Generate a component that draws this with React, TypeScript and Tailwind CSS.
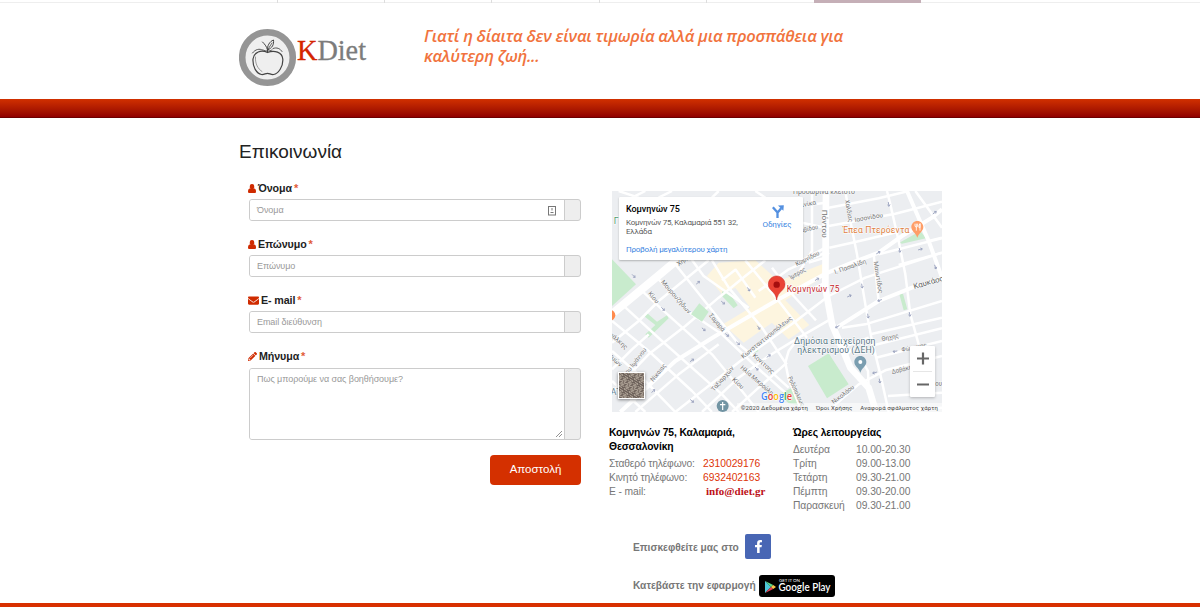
import React from "react";
import { FaEnvelope, FaFacebookF, FaPencilAlt } from "react-icons/fa";

function UserIcon() {
  return (
    <svg viewBox="0 0 8 9" className="h-[9px] w-2 shrink-0 fill-[#cf2b00]">
      <rect x="1.800" y="0" width="4.400" height="5.200" rx="2" />
      <path d="M1.500 4.500h5C7.500 4.800 8 6 8 7.500 8 8.500 7.500 9 6.500 9h-5C.5 9 0 8.500 0 7.500 0 6 .5 4.800 1.500 4.500Z" />
    </svg>
  );
}

function Label({ icon, children }: { icon: React.ReactNode; children: string }) {
  return (
    <div className="-ml-px flex h-3.5 items-center gap-[2px] text-[10.700px] font-bold text-[#222]">
      {icon}
      <span className="tracking-[-0.1px]">{children}</span>
      <span className="text-[11px] font-bold text-[#d83000]/80">*</span>
    </div>
  );
}

function Field({ placeholder, tall, badge }: { placeholder: string; tall?: boolean; badge?: boolean }) {
  return (
    <div className={`flex w-[332px] overflow-hidden rounded-[3px] border border-[#ccc] bg-[#eee] ${tall ? "h-[72px]" : "h-[22px]"}`}>
      <div className={`relative flex w-[315px] justify-between border-r border-[#ccc] bg-white pr-2 pl-[7px] text-[9px] tracking-[-0.07px] text-[#999] ${tall ? "items-start pt-1" : "items-center pt-px"}`}>
        <span>{placeholder}</span>
        {badge && (
          <svg viewBox="0 0 8 10" className="h-[10px] w-2" fill="none" stroke="#777">
            <rect x="0.5" y="0.5" width="7" height="8.500" />
            <path d="M4 2v2.500M2.500 6.500h3" />
          </svg>
        )}
        {tall && (
          <svg viewBox="0 0 6 6" className="absolute right-0.5 bottom-0.5 size-1.5" stroke="#777" strokeWidth="0.8">
            <path d="M0 6 6 0M3 6l3-3" />
          </svg>
        )}
      </div>
    </div>
  );
}

// Map geometry is drawn on a 990 x 663 grid, three units per pixel.
const streets = [
  "M0 455 80 390 140 330 290 208",
  "M0 605 110 490 220 405 320 320 400 255 460 208",
  "M0 535 60 475 110 430",
  "M70 663 200 550 320 460",
  "M190 663 385 510 545 395 650 315 760 260 990 185",
  "M270 663 380 560 470 495 560 440 655 385",
  "M360 663 440 590 525 515",
  "M130 255 240 370 330 430 430 525 520 605",
  "M85 295 150 355 300 490 390 600 440 663",
  "M190 220 290 345 380 460 430 500 530 590",
  "M30 340 150 450 330 610 380 663",
  "M0 390 110 480 240 600 300 663",
  "M0 480 90 560 190 663",
  "M0 570 100 663",
  "M235 200 275 255 410 350",
  "M300 208 350 290 450 410 520 515",
  "M372 235 330 268M370 235 430 320",
  "M400 208 500 330 585 440",
  "M480 230 545 315 612 388",
  "M440 300 530 235 640 185",
  "M570 208 640 170M590 300 640 275",
  "M20 0 80 20M100 0 60 20M180 0 140 20M320 0 300 20M430 0 460 20",
  "M600 0 600 180 560 245M570 95 640 110M570 45 640 35",
  "M650 105 720 92 850 68 990 32",
  "M650 50 800 22 890 0",
  "M652 170 720 155 860 122",
  "M650 185 640 200 590 215",
  "M800 190 990 142",
  "M860 222 990 185",
  "M700 0 715 90 735 190 765 370 780 450 805 550 830 663",
  "M825 0 835 40 860 150 880 250 895 370 920 460 945 563",
  "M785 190 800 330",
  "M690 410 760 400 990 330",
  "M775 430 990 380",
  "M785 463 990 412",
  "M792 500 990 450",
  "M725 470 700 495M690 470 770 440",
  "M665 645 740 580 820 538 990 495",
  "M828 615 990 605",
  "M840 663 990 650",
  "M910 0 990 110M950 150 990 140",
  "M520 515 530 565 570 663",
  "M560 440 530 480 520 515",
  "M770 590 768 540 745 500",
];

const majorStreets = [
  "M25 663 190 510 310 435 430 365 500 325 640 248",
  "M640 248 720 215 800 185 870 135 960 80 990 55",
  "M670 412 800 330 900 290 990 262",
  "M885 0 950 150 990 260",
];

const arrows: [number, number, number][] = [
  [65, 255, 45], [153, 354, 45], [258, 275, -40], [333, 335, 40], [410, 295, 55], [275, 415, 40], [345, 432, 40],
  [378, 457, 40], [440, 410, 55], [240, 508, -35], [470, 495, -35], [434, 533, 45], [124, 600, -40], [240, 630, 40],
  [615, 265, -30], [70, 520, 45], [830, 40, 80], [799, 185, -30], [863, 178, 80], [925, 175, -15], [968, 65, -35],
  [712, 315, -25], [750, 285, 80], [803, 328, 160], [676, 407, 150], [768, 375, 80], [893, 370, 80], [849, 481, 170],
  [788, 545, 165], [803, 570, 80], [970, 228, 70],
];

const streetLabels: [string, number, number, number, number][] = [
  ["Προσωρινά κλειστό", 543, 8, 0, 186],
  ["Χηλής", 200, 226, -35, 55],
  ["Μουρουζήδων", 146, 274, 49, 126],
  ["Κίου", 107, 308, 50, 40],
  ["Σαμαρά", 290, 374, 50, 64],
  ["Τσιάλκης", -22, 420, 42, 84],
  ["Ιμών", -8, 500, 42, 42],
  ["Αγίου Ιωάννου", 32, 570, -52, 118],
  ["Νίκαιας", 124, 573, -51, 62],
  ["Ταξιαρχών", 306, 602, -49, 92],
  ["Κωνσταντινουπόλεως", 394, 503, -39, 190],
  ["Κονίτσης", 421, 496, 42, 80],
  ["Ηλία Μικρούλη", 384, 532, 41, 124],
  ["Κίου", 359, 568, 42, 40],
  ["Ροδόπολεως", 527, 560, 65, 96],
  ["Νικολάου", 665, 640, -38, 80],
  ["Θηχης", 810, 450, -11, 52],
  ["Φώκαινας", 870, 482, -11, 76],
  ["Δαβάκη", 841, 549, -14, 62],
  ["Κωμνίδου", 554, 226, -27, 78],
  ["Ίμερος", 536, 266, -30, 54],
  ["Ι. Πασαλίδη", 670, 250, -20, 100],
  ["Ιασονίδου", 729, 93, -10, 86],
  ["Χαλδίας", 699, 28, 80, 66],
  ["Μαιωτίδος", 785, 212, 81, 96],
  ["Σινίκα", 560, 51, -12, 54],
  ["Δαβίδου", 556, 127, -12, 64],
  ["ου", 970, 586, 0, 20],
];

function MapDrawing() {
  return (
    <svg viewBox="0 0 990 663" className="block h-[221px] w-[330px]" style={{ fontFamily: "Roboto, 'Noto Sans', sans-serif" }}>
      <rect width="990" height="663" fill="#eceef1" />
      <path fill="#fdf5df" d="M285 255 320 215 430 208 500 270 635 218 638 255 520 328 592 402 530 445 480 395 395 455 333 400 415 350 370 290 330 310Z" />
      <g fill="#c8ebcd">
        <path d="M0 205 72 280 0 345Z" />
        <path d="M92 372 105 366 135 392 165 373 170 382 110 440 100 430 130 402Z" />
        <path d="M330 302 345 296 377 343 365 352 330 315Z" />
        <path d="M588 525 650 487 710 580 645 622Z" />
        <path d="M500 610 545 588 575 645 530 637Z" />
        <path d="M862 155 925 120 942 142 870 158Z" />
        <path d="M862 310 873 308 886 355 875 358ZM755 572 768 565 772 590Z" />
        <path d="M424 478 432 471 440 480 428 486Z" />
      </g>
      <g fill="none" stroke="#fff" strokeLinejoin="round">
        <g strokeWidth="7.500">{streets.map((d) => <path key={d} d={d} />)}</g>
        <g strokeWidth="12">{majorStreets.map((d) => <path key={d} d={d} />)}</g>
        <path d="M-20 385 150 245 215 190" strokeWidth="24" />
        <path d="M642 0 640 290 660 400 690 470 715 530 770 590 792 663" strokeWidth="20" />
      </g>
      <path fill="#c8ebcd" d="M262 337 290 362 270 392 237 370Z" />
      <g fill="none" stroke="#98a0bd" strokeWidth="2.500">
        {arrows.map(([x, y, r]) => <path key={`${x}-${y}`} transform={`translate(${x} ${y}) rotate(${r})`} d="M-7 0H6M1-4 6 0 1 4" />)}
      </g>
      <g fill="#747474" stroke="#f7f8f9" strokeWidth="3" paintOrder="stroke" fontSize="19">
        {streetLabels.map(([text, x, y, r, w]) => (
          <text key={`${text}-${x}`} transform={`translate(${x} ${y}) rotate(${r})`} textLength={w} lengthAdjust="spacingAndGlyphs">{text}</text>
        ))}
        <text transform="translate(630 56) rotate(90)" fontSize="22" textLength="84" lengthAdjust="spacingAndGlyphs">Πόντου</text>
        <text transform="translate(907 294) rotate(-16)" fontSize="23" textLength="106" fill="#5f5f5f" lengthAdjust="spacingAndGlyphs">Καυκάσου</text>
      </g>
      <g stroke="#fff" strokeWidth="3" paintOrder="stroke" fontSize="26">
        <text x="692" y="126" fill="#df8142" textLength="200">Έπεα Πτερόεντα</text>
        <text x="524" y="303" fill="#c5221f" fontSize="25" textLength="158">Κομνηνών 75</text>
        <text x="546" y="459" fill="#587785" textLength="244">Δημόσια επιχείρηση</text>
        <text x="556" y="485" fill="#587785" textLength="232">ηλεκτρισμού (ΔΕΗ)</text>
        <text x="5" y="99" fill="#4d9b6b">Γ</text>
        <text x="-4" y="613" fill="#668391">ΑΤ</text>
      </g>
      <path d="M916 90c10 0 18 8 18 18 0 13-12 16-18 32-6-16-18-19-18-32 0-10 8-18 18-18Z" fill="#ff9e67" />
      <path d="M909 98v8q4 5 8 0v-8m-4 0v21m11-21q-5 5-3 12h3zv21" stroke="#fff" strokeWidth="2.500" fill="none" />
      <circle cx="-6" cy="373" r="16" fill="#ff8a4c" />
      <path d="M745 495c10 0 18 8 18 18 0 13-12 16-18 32-6-16-18-19-18-32 0-10 8-18 18-18Z" fill="#7b9eb0" />
      <circle cx="745" cy="513" r="6" fill="#fff" />
      <circle cx="332" cy="645" r="18" fill="#7194a3" />
      <path d="M332 633v24M324 641h16" stroke="#fff" strokeWidth="3.500" />
      <path d="M494 255c14 0 25 11 25 25 0 20-22 20-25 47-3-27-25-27-25-47 0-14 11-25 25-25Z" fill="#ea4335" stroke="#c5221f" strokeWidth="1.500" />
      <circle cx="494" cy="281" r="9.500" fill="#a50e0e" />
    </svg>
  );
}

function MapPanel() {
  return (
    <div className="relative ml-[3px] h-[221px] w-[330px] overflow-hidden font-['Roboto','Noto_Sans',sans-serif]">
      <MapDrawing />
      <div className="absolute top-[6px] left-[7px] flex h-[63px] w-[184px] justify-between rounded-[1px] bg-white pl-[7px] shadow-[0_1px_2px_rgba(0,0,0,0.25)]">
        <div className="flex flex-col whitespace-nowrap">
          <span className="mt-[7px] text-[9px] leading-[10px] font-medium tracking-[-0.05px] text-black">Κομνηνών 75</span>
          <span className="mt-[4px] text-[8px] leading-[9px] tracking-[-0.230px] text-[#5b5b5b]">Κομνηνών 75, Καλαμαριά 551 32,<br />Ελλάδα</span>
          <span className="mt-[9px] text-[8px] leading-[10px] tracking-[-0.240px] text-[#3a84df]">Προβολή μεγαλύτερου χάρτη</span>
        </div>
        <div className="flex w-[52px] flex-col items-center pt-2 text-[8px] leading-[10px] tracking-[-0.15px] text-[#3a84df]">
          <svg viewBox="0 0 14 14" className="mb-[2px] h-[13px] w-[13px]" fill="none" stroke="#5490e0" strokeWidth="2.500">
            <path d="M2 2.500 7 8v6M6.500 9 11 3.500" />
            <path d="m7.500.500 6.300-.300-.500 6Z" fill="#5490e0" stroke="none" />
          </svg>
          <span>Οδηγίες</span>
        </div>
      </div>
      <div className="absolute top-[181px] left-[6px] size-[27px] border border-white bg-[#847a6e] shadow-[0_1px_3px_rgba(0,0,0,0.45)]">
        <svg viewBox="0 0 25 25" className="size-full">
          {Array.from({ length: 625 }, (_, i) => (
            <rect key={i} x={i % 25} y={Math.floor(i / 25)} width="1" height="1" fill={["#6d625b", "#9a8f84", "#7d7068", "#a79c90", "#85796f"][((i * i * 31 + i * 17) >> 4) % 5]} />
          ))}
        </svg>
      </div>
      <div className="absolute top-[155px] left-[298px] flex h-[51px] w-[25px] flex-col items-center rounded-[1px] bg-white shadow-[0_1px_3px_rgba(0,0,0,0.25)]">
        <svg viewBox="0 0 25 51" className="h-[51px] w-[25px]" stroke="#666">
          <path d="M7 12.500h12M13 6.500v12M7 38.500h12" strokeWidth="2.200" />
          <path d="M3 25.500h19" stroke="#e6e6e6" />
        </svg>
      </div>
      <div className="absolute right-0 bottom-0 flex h-[9px] items-center gap-2 bg-white/50 pr-1 pl-1 text-[6px] tracking-[0.120px] whitespace-nowrap text-[#444]">
        <span>©2020 Δεδομένα χάρτη</span>
        <span>Όροι Χρήσης</span>
        <span>Αναφορά σφάλματος χάρτη</span>
      </div>
      <svg viewBox="0 0 32 13" className="absolute top-[200px] left-[149px] h-[13px] w-8 font-['Open_Sans',sans-serif]">
        <text x="0" y="8.500" fontSize="10" fontWeight="600" textLength="31" lengthAdjust="spacingAndGlyphs" stroke="#fff" strokeWidth="1" paintOrder="stroke">
          <tspan fill="#4285f4">G</tspan><tspan fill="#ea4335">o</tspan><tspan fill="#fbbc05">o</tspan><tspan fill="#4285f4">g</tspan><tspan fill="#34a853">l</tspan><tspan fill="#ea4335">e</tspan>
        </text>
      </svg>
    </div>
  );
}

function Logo() {
  return (
    <div className="flex w-[185px]">
      <svg viewBox="0 0 58 59" className="h-[59px] w-[58px] shrink-0" fill="none">
        <circle cx="28.500" cy="29.500" r="25.300" fill="#efefef" stroke="#959595" strokeWidth="6.600" />
        <g stroke="#444" strokeWidth="1.200" strokeLinecap="round">
          <path d="M28.500 24.500C22 21.500 15 24 14 31c-.5 8 3.500 14.500 8.500 15.500 2.500.3 4-1.200 6-1.200s3.500 1.500 6 1.200c5-.8 9.800-8 9.300-15.500-.6-7-8.500-9-15.300-6.500Z" />
          <path d="M28.500 22c-.5-4 2-8.500 6-10 .5 4.500-1 8-6 10Zm0 2v-2c-1-4-3-6-5-8" strokeWidth="1" />
          <path d="M28.500 22 33 15M24 22c3 1.500 6 1.500 9 0" strokeWidth="0.800" />
          <path d="M13.500 25c3-4 7-4.500 10-3M34 20.500c4-1.500 7 0 9 3" strokeWidth="0.900" />
          <path d="M16.500 29c-.5 7 2.500 12 6.500 14.500" strokeWidth="0.500" />
        </g>
      </svg>
      <svg viewBox="0 0 72 58" className="-ml-px h-[58px] w-[72px] shrink-0">
        <text x="1" y="32" fontSize="29.500" textLength="69" lengthAdjust="spacingAndGlyphs" fontFamily="'Liberation Serif', serif">
          <tspan fill="#d42400" stroke="#d42400" strokeWidth="0.300">K</tspan><tspan fill="#7c7c7c" stroke="#7c7c7c" strokeWidth="0.300">Diet</tspan>
        </text>
      </svg>
    </div>
  );
}

const hours = [
  ["Δευτέρα", "10.00-20.30"],
  ["Τρίτη", "09.00-13.00"],
  ["Τετάρτη", "09.30-21.00"],
  ["Πέμπτη", "09.30-20.00"],
  ["Παρασκευή", "09.30-21.00"],
];

export default function App() {
  return (
    <div className="flex h-[607px] w-[1200px] flex-col overflow-hidden bg-white font-['Liberation_Sans',Arial,sans-serif]">
      <nav className="flex h-[3px] shrink-0 border-b border-[#eee] pl-[277px]">
        {[0, 1, 2, 3, 4].map((i) => <div key={i} className="-mb-px h-[3px] w-[107.200px] border-l border-[#ddd]" />)}
        <div className="-mb-px ml-px h-[3px] w-[107px] bg-[#c5afb7]" />
      </nav>
      <header className="flex h-24 shrink-0 pt-[25px] pl-[239px]">
        <Logo />
        <p className="-mt-0.5 text-[16.500px] leading-5 font-semibold tracking-[-0.280px] whitespace-nowrap text-[#f1733d] italic font-['Open_Sans','Noto_Sans',sans-serif]">
          Γιατί η δίαιτα δεν είναι τιμωρία αλλά μια προσπάθεια για<br />καλύτερη ζωή...
        </p>
      </header>
      <div className="h-[19px] shrink-0 border-b border-[#6d0000] bg-linear-to-b from-[#d13000] to-[#910000]" />
      <main className="flex h-[485px] shrink-0 pl-[239px]">
        <section className="w-[370px] pt-[22px]">
          <h1 className="h-[41px] text-[19px] leading-6 text-[#222]">Επικοινωνία</h1>
          <form className="ml-[10px] flex w-[332px] flex-col">
            <div className="flex h-14 flex-col gap-1">
              <Label icon={<UserIcon />}>Όνομα</Label>
              <Field placeholder="Όνομα" badge />
            </div>
            <div className="flex h-14 flex-col gap-1">
              <Label icon={<UserIcon />}>Επώνυμο</Label>
              <Field placeholder="Επώνυμο" />
            </div>
            <div className="flex h-14 flex-col gap-1">
              <Label icon={<FaEnvelope className="size-[11px] text-[#cf2b00]" />}>E- mail</Label>
              <Field placeholder="Email διεύθυνση" />
            </div>
            <div className="flex flex-col gap-[5px]">
              <Label icon={<FaPencilAlt className="size-[9px] text-[#cf2b00]" />}>Μήνυμα</Label>
              <Field placeholder="Πως μπορούμε να σας βοηθήσουμε?" tall />
            </div>
            <button type="button" className="mt-[15px] h-[30px] w-[91px] self-end rounded-[4px] bg-[#d43000] text-[11.500px] text-white">Αποστολή</button>
          </form>
        </section>
        <section className="w-[340px] pt-[73px]">
          <MapPanel />
          <div className="flex h-[122px] pt-[14px] text-[10.300px] leading-[14px] text-[#777]">
            <div className="w-[184px]">
              <h2 className="mb-[3px] font-bold tracking-[-0.120px] text-black">Κομνηνών 75, Καλαμαριά,<br />Θεσσαλονίκη</h2>
              <div className="grid grid-cols-[94px_auto] whitespace-nowrap">
                <span className="tracking-[-0.160px]">Σταθερό τηλέφωνο:</span><span className="text-[#dd3508]">2310029176</span>
                <span className="tracking-[-0.160px]">Κινητό τηλέφωνο:</span><span className="text-[#dd3508]">6932402163</span>
                <span className="tracking-[-0.1px]">E - mail:</span><span className="pl-[3px] text-[11px] leading-[13px] font-bold text-[#bd1017] font-['Liberation_Serif',serif]">info@diet.gr</span>
              </div>
            </div>
            <div>
              <h2 className="mb-[3px] font-bold tracking-[-0.080px] text-black">Ώρες λειτουργείας</h2>
              <div className="grid grid-cols-[63px_auto] whitespace-nowrap">
                {hours.map(([day, time]) => <React.Fragment key={day}><span className="tracking-[-0.1px]">{day}</span><span className="tracking-[-0.05px]">{time}</span></React.Fragment>)}
              </div>
            </div>
          </div>
          <div className="flex h-[26px] items-center pl-[24px] text-[10.200px] font-bold text-[#777]">
            <span className="w-[112px] pt-0.5 whitespace-nowrap">Επισκεφθείτε μας στο</span>
            <span className="-mt-px flex h-[25px] w-[26px] items-center justify-center rounded-[2px] bg-[#4866b4] text-white"><FaFacebookF className="size-[13px]" /></span>
          </div>
          <div className="mt-[15px] flex h-[22px] items-center pl-[24px] text-[10.200px] font-bold text-[#777]">
            <span className="w-[125.500px] whitespace-nowrap">Κατεβάστε την εφαρμογή</span>
            <span className="flex h-[22px] w-[76px] items-center rounded-[3px] bg-black pl-[6px] text-white font-['Lato',sans-serif]">
              <svg viewBox="0 0 11 12" className="mt-0.5 h-3 w-[11px] shrink-0">
                <path d="M0 0v12l6-6Z" fill="#4cc6d8" />
                <path d="m0 0 6 6 2.200-2Z" fill="#5bd789" />
                <path d="m0 12 6-6 2.200 2Z" fill="#e83e55" />
                <path d="M8.200 4 6 6l2.200 2L11 6Z" fill="#fbc64b" />
              </svg>
              <svg viewBox="0 0 54 22" className="ml-[2px] h-[22px] w-[54px]" fill="#fff">
                <text x="1" y="6.500" fontSize="4.500" fontWeight="400" textLength="21">GET IT ON</text>
                <text x="0.500" y="16" fontSize="10.500" fontWeight="600" textLength="52" lengthAdjust="spacingAndGlyphs">Google Play</text>
              </svg>
            </span>
          </div>
        </section>
      </main>
      <footer className="h-1 shrink-0 bg-[#d83000]" />
    </div>
  );
}
